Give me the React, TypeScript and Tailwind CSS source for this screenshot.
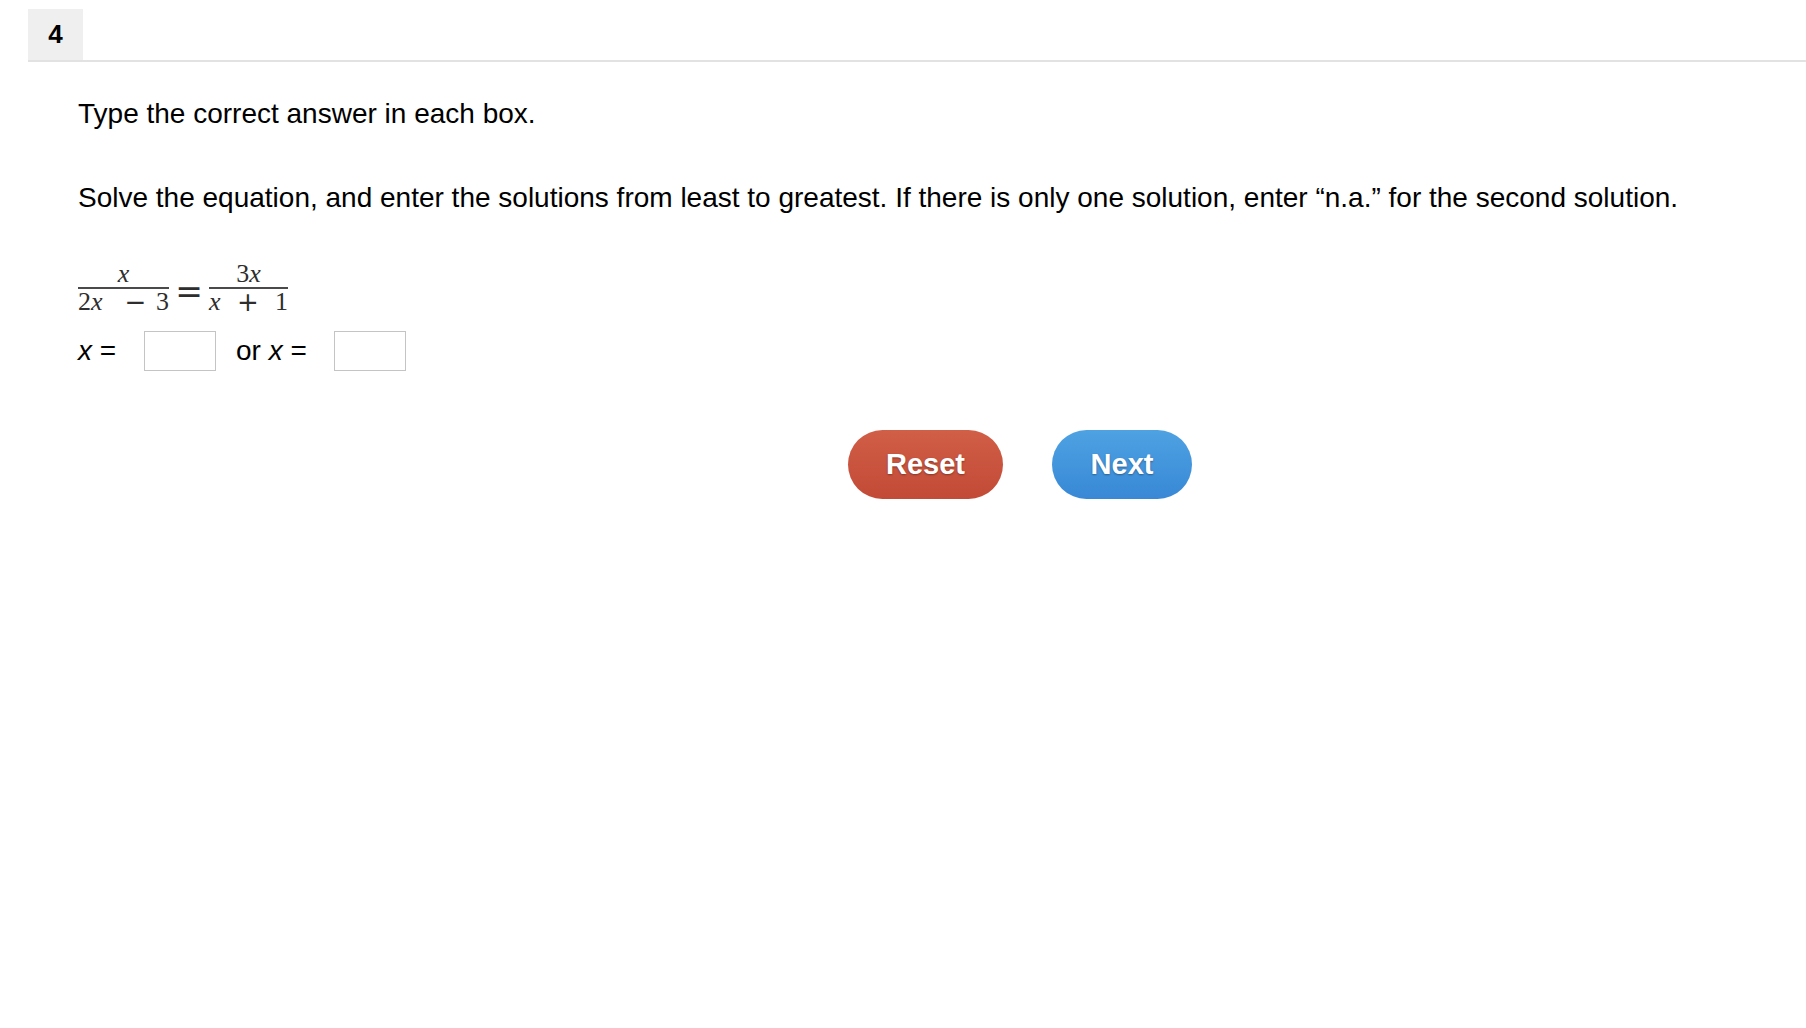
import { useState } from 'react'

const sans = { fontFamily: '"Liberation Sans", Arial, sans-serif' }
const serif = { fontFamily: '"Liberation Serif", "Times New Roman", serif' }
const wideSymbols = { fontFamily: '"DejaVu Sans", sans-serif' }

function Fraction({ num, den, width }: { num: React.ReactNode; den: React.ReactNode; width: string }) {
  return (
    <span className={`inline-flex flex-col items-stretch text-center ${width}`}>
      <span className="leading-[26px]">{num}</span>
      <span className="h-[2px] bg-[#4a4a4a]" />
      <span className="flex justify-between leading-[26px] whitespace-nowrap">{den}</span>
    </span>
  )
}

function AnswerBox({ value, onChange }: { value: string; onChange: (v: string) => void }) {
  return (
    <input
      value={value}
      onChange={(e) => onChange(e.target.value)}
      className="w-[72px] h-[40px] border border-[#c4c4c4] bg-white px-2 text-[22px] outline-none"
      style={sans}
    />
  )
}

export default function App() {
  const [first, setFirst] = useState('')
  const [second, setSecond] = useState('')

  const reset = () => {
    setFirst('')
    setSecond('')
  }

  return (
    <div className="min-h-screen w-[1806px] bg-white text-black" style={sans}>
      <div className="pl-[28px] pt-[9px]">
        <div className="border-b-2 border-[#e2e2e2]">
          <div className="w-[55px] h-[51px] bg-[#efefef] flex items-center justify-center text-[26px] font-bold">
            4
          </div>
        </div>
      </div>

      <div className="pl-[78px] pt-[36px]">
        <p className="text-[28px] leading-[32px]">Type the correct answer in each box.</p>
        <p className="mt-[52px] text-[28px] leading-[32px]">
          Solve the equation, and enter the solutions from least to greatest. If there is only one
          solution, enter “n.a.” for the second solution.
        </p>

        {/* x / (2x - 3) = 3x / (x + 1) */}
        <div className="mt-[47px] flex items-center text-[26px] text-[#2e2e2e]" style={serif}>
          <Fraction
            width="w-[91px]"
            num={<i>x</i>}
            den={
              <>
                <span>
                  2<i>x</i>
                </span>
                <span className="pl-[12px]" style={wideSymbols}>
                  −
                </span>
                <span>3</span>
              </>
            }
          />
          <span
            className="w-[40px] text-center text-[33px] leading-none translate-y-[3px]"
            style={wideSymbols}
          >
            =
          </span>
          <Fraction
            width="w-[79px]"
            num={
              <>
                3<i>x</i>
              </>
            }
            den={
              <>
                <i>x</i>
                <span style={wideSymbols}>+</span>
                <span>1</span>
              </>
            }
          />
        </div>

        <div className="mt-[15px] flex items-center text-[28px]">
          <span className="w-[66px]">
            <i>x</i> =
          </span>
          <AnswerBox value={first} onChange={setFirst} />
          <span className="ml-[20px] w-[98px]">
            or <i>x</i> =
          </span>
          <AnswerBox value={second} onChange={setSecond} />
        </div>
      </div>

      <div className="mt-[58px] ml-[848px] flex gap-[49px]">
        <button
          onClick={reset}
          className="w-[155px] h-[69px] rounded-full bg-gradient-to-b from-[#d15e47] to-[#c24a36] text-white text-[29px] font-bold [text-shadow:0_1px_2px_rgba(0,0,0,0.35)]"
          style={sans}
        >
          Reset
        </button>
        <button
          className="w-[140px] h-[69px] rounded-full bg-gradient-to-b from-[#4ea2e2] to-[#3888d6] text-white text-[29px] font-bold [text-shadow:0_1px_2px_rgba(0,0,0,0.35)]"
          style={sans}
        >
          Next
        </button>
      </div>
    </div>
  )
}
